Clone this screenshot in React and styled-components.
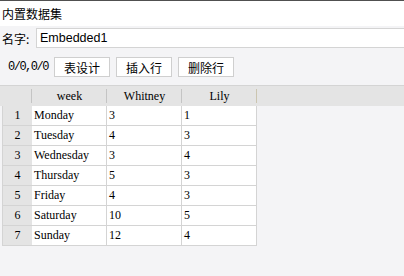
import React from 'react'
import styled, { createGlobalStyle } from 'styled-components'

const GlobalStyle = createGlobalStyle`
    html, body {
        margin: 0;
        padding: 0;
        background: #f4f4f6;
    }
    * {
        box-sizing: border-box;
    }
`

const rows = [
    ['Monday', '3', '1'],
    ['Tuesday', '4', '3'],
    ['Wednesday', '3', '4'],
    ['Thursday', '5', '3'],
    ['Friday', '4', '3'],
    ['Saturday', '10', '5'],
    ['Sunday', '12', '4'],
]

const columns = ['week', 'Whitney', 'Lily']

const App = () => {
    return (
        <Page>
            <GlobalStyle />
            <TitleBar>内置数据集</TitleBar>
            <NameRow>
                <Label>名字:</Label>
                <NameInput defaultValue="Embedded1" />
            </NameRow>
            <Toolbar>
                <Counter>0/0,0/0</Counter>
                <Button>表设计</Button>
                <Button>插入行</Button>
                <Button>删除行</Button>
            </Toolbar>
            <Grid>
                <HeaderRow>
                    <Corner />
                    {columns.map(c => <HeaderCell key={c}>{c}</HeaderCell>)}
                </HeaderRow>
                {rows.map((r, i) => (
                    <Row key={i}>
                        <RowNumber>{i + 1}</RowNumber>
                        {r.map((v, j) => <Cell key={j}>{v}</Cell>)}
                    </Row>
                ))}
            </Grid>
        </Page>
    )
}

const Page = styled.div`
    width: 404px;
    height: 276px;
    background: #f4f4f6;
    border-top: 1px solid #505050;
    display: flex;
    flex-direction: column;
    overflow: hidden;
`

const TitleBar = styled.div`
    height: 25px;
    background: #fff;
    padding-left: 2px;
    display: flex;
    align-items: center;
    font-family: "Noto Sans CJK SC", sans-serif;
    font-size: 12px;
    color: #000;
`

const NameRow = styled.div`
    display: flex;
    align-items: center;
    margin-top: 2px;
    padding-left: 2px;
    height: 20px;
`

const Label = styled.span`
    width: 34px;
    font-family: "Noto Sans CJK SC", sans-serif;
    font-size: 12px;
    color: #000;
`

const NameInput = styled.input`
    flex: 1;
    height: 20px;
    border: 1px solid #d4d4d4;
    border-right: none;
    background: #fff;
    padding: 0 0 0 3px;
    font-family: "Liberation Sans", sans-serif;
    font-size: 12.5px;
    color: #000;
    outline: none;
`

const Toolbar = styled.div`
    display: flex;
    align-items: center;
    gap: 6px;
    margin-top: 9px;
    padding-left: 8px;
    height: 20px;
`

const Counter = styled.span`
    font-family: "Liberation Mono", monospace;
    font-size: 12px;
    letter-spacing: -1.5px;
    color: #000;
    width: 40px;
`

const Button = styled.button`
    width: 56px;
    height: 20px;
    padding: 0;
    border: 1px solid #cfcfcf;
    background: #fff;
    font-family: "Noto Sans CJK SC", sans-serif;
    font-size: 12px;
    color: #000;
`

const Grid = styled.div`
    margin-top: 8px;
    padding-left: 2px;
    display: flex;
    flex-direction: column;
    font-family: "Liberation Serif", serif;
    font-size: 12px;
    color: #000;
`

const HeaderRow = styled.div`
    display: flex;
    height: 21px;
    background: #e4e4e4;
    border-top: 1px solid #d4d4d4;
    margin-left: -2px;
    padding-left: 2px;
`

const Corner = styled.div`
    width: 30px;
    position: relative;
    &::after {
        content: '';
        position: absolute;
        right: 0;
        top: 3px;
        bottom: 3px;
        width: 1px;
        background: #c4c4c4;
    }
`

const HeaderCell = styled.div`
    width: 75px;
    display: flex;
    align-items: center;
    justify-content: center;
    position: relative;
    &::after {
        content: '';
        position: absolute;
        right: 0;
        top: 3px;
        bottom: 3px;
        width: 1px;
        background: #c4c4c4;
    }
    &:last-child::after {
        background: #cbc5b0;
    }
`

const Row = styled.div`
    display: flex;
    height: 20px;
    width: 256px;
`

const RowNumber = styled.div`
    width: 30px;
    background: #e4e4e4;
    border-bottom: 1px solid #d4d4d4;
    border-left: 1px solid #d4d4d4;
    display: flex;
    align-items: center;
    justify-content: center;
`

const Cell = styled.div`
    width: 75px;
    background: #fff;
    border-bottom: 1px solid #d4d4d4;
    border-right: 1px solid #d4d4d4;
    display: flex;
    align-items: center;
    padding-left: 2px;
`

export default App
